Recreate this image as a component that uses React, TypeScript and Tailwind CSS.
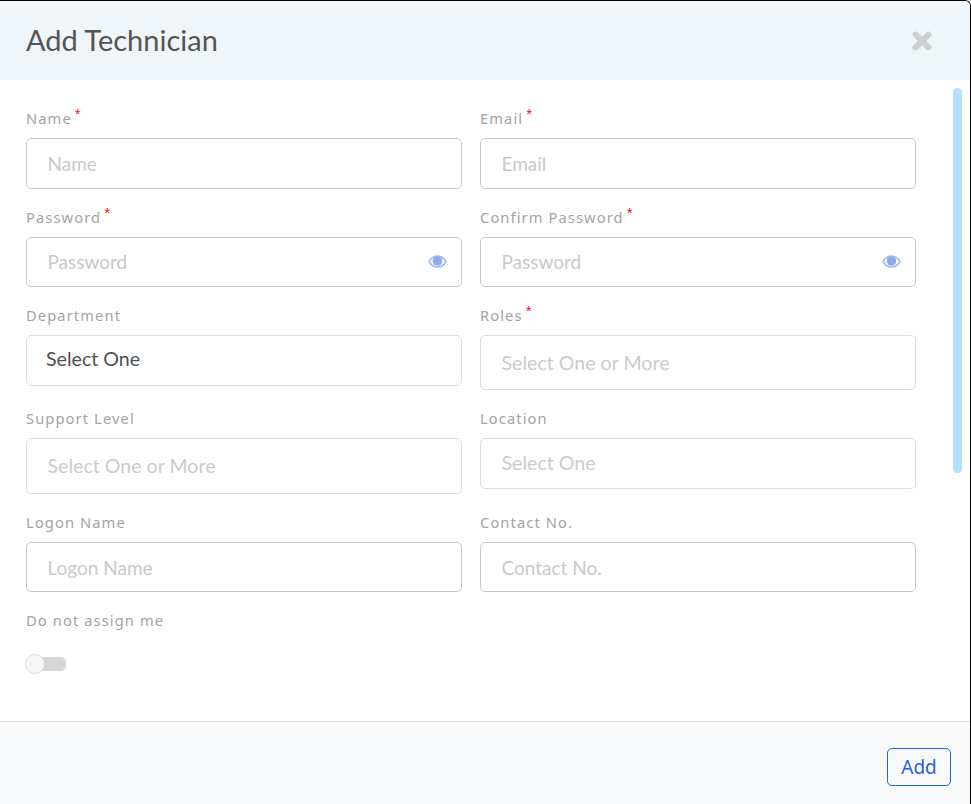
import React from "react";

function Label({ text, req }: { text: string; req?: boolean }) {
  return (
    <div className="h-[20px] mb-[9px] pb-[2px] flex items-center text-[14.7px] leading-[18px] tracking-[1.1px] text-[#a3a3a3] font-['Noto_Sans',sans-serif] whitespace-nowrap">
      <span>{text}</span>
      {req && <span className="ml-[3px] -mt-[9px] text-[15px] leading-[14px] text-[#f01414] font-['Liberation_Sans',sans-serif]">*</span>}
    </div>
  );
}

function Eye() {
  return (
    <svg viewBox="0 0 19 13" className="absolute right-[14.5px] top-[17px] w-[19px] h-[13px]">
      <path d="M0.9 6.5C3.4 2.6 6.4 0.9 9.5 0.9S15.6 2.6 18.1 6.5C15.6 10.4 12.6 12.1 9.5 12.1S3.4 10.4 0.9 6.5Z" fill="none" stroke="#a0b6ec" strokeWidth="1.5" />
      <circle cx="9.5" cy="6" r="4.8" fill="#8fabe8" />
    </svg>
  );
}

function Field({
  label, req, placeholder, h = "h-[50px]", eye, value, light, shift,
}: {
  label: string; req?: boolean; placeholder: string; h?: string; eye?: boolean; value?: boolean; light?: boolean; shift?: "down" | "up";
}) {
  const textCls = value
    ? "text-[19.6px] text-[#505050] -mt-[3px]"
    : light
    ? "text-[19.6px] text-[#cbcbcb]"
    : "text-[19px] text-[#c9c9c9]";
  const shiftCls = shift === "down" ? "pt-[2px]" : shift === "up" ? "pb-[2px]" : "";
  return (
    <div className="flex flex-col">
      <Label text={label} req={req} />
      <div className={`relative ${h} rounded-[5px] border flex items-center ${shiftCls} ${light ? "border-[#dcdcdc]" : "border-[#c8c8c8]"} ${value ? "pl-[19px]" : "pl-[20.5px]"}`}>
        <span className={`font-['Lato',sans-serif] whitespace-nowrap ${textCls}`}>{placeholder}</span>
        {eye && <Eye />}
      </div>
    </div>
  );
}

export default function App() {
  return (
    <div className="relative w-[971px] h-[804px] bg-white flex flex-col overflow-hidden border-t border-r border-black rounded-tr-[6px]">
      <header className="h-[79px] shrink-0 bg-[#eff5f8] flex items-center justify-between pl-[26px] pr-[38px]">
        <h1 className="font-['Lato',sans-serif] text-[29px] leading-[34px] font-normal text-[#555555] -mt-[1px]">Add Technician</h1>
        <svg viewBox="0 0 20 20" className="w-[20px] h-[20px]" aria-label="close">
          <path d="M3.6 3.6 L16.4 16.4 M16.4 3.6 L3.6 16.4" stroke="#cbd0d1" strokeWidth="6" strokeLinecap="round" />
        </svg>
      </header>

      <main className="relative flex-1 min-h-0 pl-[26px] pt-[29px]">
        <div className="grid grid-cols-[436px_436px] gap-x-[18px]">
          <div className="mb-[19px]"><Field label="Name" req placeholder="Name" h="h-[51px]" shift="down" /></div>
          <div className="mb-[19px]"><Field label="Email" req placeholder="Email" h="h-[51px]" shift="down" /></div>

          <div className="mb-[19px]"><Field label="Password" req placeholder="Password" eye /></div>
          <div className="mb-[19px]"><Field label="Confirm Password" req placeholder="Password" eye /></div>

          <div className="mb-[19px]"><Field label="Department" placeholder="Select One" h="h-[51px]" value light /></div>
          <div className="mb-[19px]"><Field label="Roles" req placeholder="Select One or More" h="h-[55px]" light /></div>

          <div className="mb-[19px]"><Field label="Support Level" placeholder="Select One or More" h="h-[56px]" light /></div>
          <div className="mb-[19px]"><Field label="Location" placeholder="Select One" h="h-[51px]" light shift="up" /></div>

          <div className="mb-[19px]"><Field label="Logon Name" placeholder="Logon Name" shift="down" /></div>
          <div className="mb-[19px]"><Field label="Contact No." placeholder="Contact No." shift="down" /></div>
        </div>

        <Label text="Do not assign me" />
        <div className="relative mt-[23px] ml-[-1px] w-[41px] h-[20px] flex items-center">
          <div className="absolute left-[1px] right-0 h-[14px] rounded-[5px] bg-[#d6d6d6]" />
          <div className="absolute left-0 top-0 w-[20px] h-[20px] rounded-full border border-[#d5d9e2] bg-[#f7f7f8]" />
        </div>

        <div className="absolute left-[953px] top-[8px] w-[9px] h-[385px] rounded-[5px] bg-[#b3dffb]" />
      </main>

      <footer className="h-[83px] shrink-0 border-t border-[#d9d9d9] bg-[#f8f9fb] flex items-start justify-end pt-[26px] pr-[19px]">
        <button className="w-[64px] h-[38px] rounded-[5px] border border-[#2563d6] text-[#2563d6] text-[19px] leading-[24px] font-['Noto_Sans',sans-serif]">
          Add
        </button>
      </footer>
    </div>
  );
}
